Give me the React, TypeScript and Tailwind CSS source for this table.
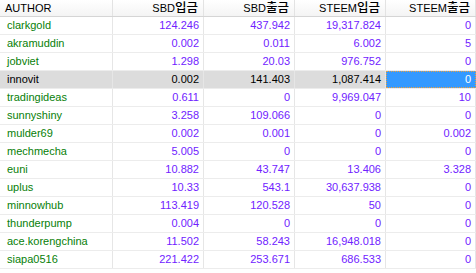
import React from "react";

const rows: [string, string, string, string, string][] = [
  ["clarkgold", "124.246", "437.942", "19,317.824", "0"],
  ["akramuddin", "0.002", "0.011", "6.002", "5"],
  ["jobviet", "1.298", "20.03", "976.752", "0"],
  ["innovit", "0.002", "141.403", "1,087.414", "0"],
  ["tradingideas", "0.611", "0", "9,969.047", "10"],
  ["sunnyshiny", "3.258", "109.066", "0", "0"],
  ["mulder69", "0.002", "0.001", "0", "0.002"],
  ["mechmecha", "5.005", "0", "0", "0"],
  ["euni", "10.882", "43.747", "13.406", "3.328"],
  ["uplus", "10.33", "543.1", "30,637.938", "0"],
  ["minnowhub", "113.419", "120.528", "50", "0"],
  ["thunderpump", "0.004", "0", "0", "0"],
  ["ace.korengchina", "11.502", "58.243", "16,948.018", "0"],
  ["siapa0516", "221.422", "253.671", "686.533", "0"],
];

const headers: [string, string][] = [
  ["AUTHOR", ""],
  ["SBD", "입금"],
  ["SBD", "출금"],
  ["STEEM", "입금"],
  ["STEEM", "출금"],
];

export default function App() {
  return (
    <div
      className="w-[476px] h-[273px] overflow-hidden bg-white text-[11px] leading-none"
      style={{ fontFamily: '"Liberation Sans", "Noto Sans CJK KR", sans-serif' }}
    >
      <div className="grid grid-cols-[113px_91px_91px_91px_90px] h-[17px] border-b border-[#d5d5d5] bg-gradient-to-b from-white to-[#f4f4f4]">
        {headers.map(([a, k], i) => (
          <div
            key={i}
            className={`flex items-center h-[16px] border-r border-[#e3e3e3] text-black ${
              i === 0 ? "justify-start pl-[5px]" : "justify-end pr-[5px]"
            }`}
          >
            <span>{a}</span>
            {k && <span className="text-[12.5px] font-medium">{k}</span>}
          </div>
        ))}
      </div>
      {rows.map((r, ri) => {
        const sel = ri === 3;
        return (
          <div
            key={r[0]}
            className={`grid grid-cols-[113px_91px_91px_91px_90px] h-[18px] border-b border-[#ececec] ${
              sel ? "bg-[#dcdcdc]" : "bg-white"
            }`}
          >
            {r.map((c, ci) => {
              const focus = sel && ci === 4;
              return (
                <div
                  key={ci}
                  className={`flex items-center h-[17px] ${
                    ci === 0 ? "justify-start pl-[7px]" : "justify-end pr-[4px]"
                  } ${
                    focus
                      ? "bg-[#3399ff] text-white border border-dotted border-[#e8a040]"
                      : "border-r border-[#e6e6e6]"
                  } ${
                    focus
                      ? ""
                      : sel
                      ? "text-black"
                      : ci === 0
                      ? "text-[#078007]"
                      : "text-[#7022ff]"
                  }`}
                >
                  {c}
                </div>
              );
            })}
          </div>
        );
      })}
    </div>
  );
}
